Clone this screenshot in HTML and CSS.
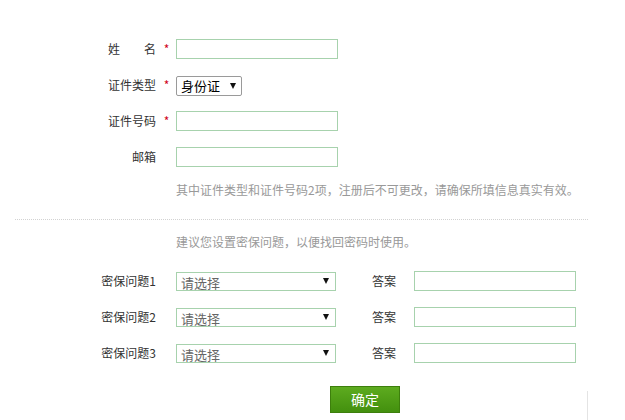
FILE: index.html
```html
<!DOCTYPE html>
<html lang="zh-CN">
<head>
<meta charset="utf-8">
<title>注册信息</title>
<link rel="stylesheet" href="styles.css">
</head>
<body>
<div class="page">
  <div class="section basic">
    <div class="row">
      <span class="label">姓　　名</span><span class="star">*</span>
      <span class="input"></span>
    </div>
    <div class="row">
      <span class="label">证件类型</span><span class="star">*</span>
      <span class="idselect"><span class="idtext">身份证</span><span class="arrow"></span></span>
    </div>
    <div class="row">
      <span class="label">证件号码</span><span class="star">*</span>
      <span class="input"></span>
    </div>
    <div class="row">
      <span class="label">邮箱</span><span class="star"></span>
      <span class="input"></span>
    </div>
  </div>
  <p class="hint hint1">其中证件类型和证件号码2项，注册后不可更改，请确保所填信息真实有效。</p>
  <div class="divider"></div>
  <p class="hint hint2">建议您设置密保问题，以便找回密码时使用。</p>
  <div class="section questions">
    <div class="row">
      <span class="label">密保问题1</span><span class="star"></span>
      <span class="qselect"><span class="qtext">请选择</span><span class="arrow"></span></span>
      <span class="alabel">答案</span>
      <span class="input"></span>
    </div>
    <div class="row">
      <span class="label">密保问题2</span><span class="star"></span>
      <span class="qselect"><span class="qtext">请选择</span><span class="arrow"></span></span>
      <span class="alabel">答案</span>
      <span class="input"></span>
    </div>
    <div class="row">
      <span class="label">密保问题3</span><span class="star"></span>
      <span class="qselect"><span class="qtext">请选择</span><span class="arrow"></span></span>
      <span class="alabel">答案</span>
      <span class="input"></span>
    </div>
  </div>
  <div class="actions">
    <button class="submit" type="button">确定</button>
    <span class="edge"></span>
  </div>
</div>
</body>
</html>
```
FILE: styles.css
```css
html, body {
  margin: 0;
  padding: 0;
  background: #fff;
}
body {
  font-family: "Noto Sans CJK SC", "Liberation Sans", sans-serif;
  font-size: 12px;
  color: #333;
  width: 625px;
  height: 420px;
  overflow: hidden;
}
.page {
  padding-top: 39px;
}
.section {
  display: flex;
  flex-direction: column;
  gap: 16px;
}
.row {
  display: flex;
  align-items: center;
  height: 20px;
  line-height: 20px;
}
.label {
  width: 156px;
  text-align: right;
  color: #333;
}
.star {
  width: 20px;
  text-align: center;
  color: #d0021b;
  font-size: 12px;
  padding-left: 1px;
  box-sizing: border-box;
}
.input {
  width: 162px;
  height: 20px;
  box-sizing: border-box;
  border: 1px solid #a7d2ad;
  background: #fff;
}
.idselect {
  width: 66px;
  height: 20px;
  box-sizing: border-box;
  border: 1px solid #9a9a9a;
  border-radius: 2px;
  display: flex;
  align-items: center;
  justify-content: space-between;
  padding: 0 5px 0 4px;
  color: #000;
  font-size: 13px;
  margin-top: 1px;
}
.arrow {
  width: 0;
  height: 0;
  border-left: 3px solid transparent;
  border-right: 3px solid transparent;
  border-top: 6px solid #111;
}
.qselect {
  width: 160px;
  height: 19px;
  box-sizing: border-box;
  border: 1px solid #a7d2ad;
  display: flex;
  align-items: center;
  justify-content: space-between;
  padding: 0 6px 0 4px;
}
.qtext {
  color: #666;
  font-size: 13px;
  line-height: 18px;
  padding-top: 3px;
}
.alabel {
  width: 60px;
  text-align: right;
  margin-right: 18px;
  color: #333;
}
.hint {
  margin: 0;
  padding-left: 176px;
  line-height: 20px;
  color: #999;
  font-size: 12px;
}
.hint1 {
  margin-top: 13px;
}
.divider {
  margin: 19px 0 0 15px;
  width: 573px;
  border-top: 1px dotted #d2d2d2;
}
.hint2 {
  margin-top: 12px;
}
.questions {
  margin-top: 19px;
}
.actions {
  display: flex;
  align-items: flex-start;
  width: 588px;
  margin-top: 23px;
  padding-left: 330px;
  box-sizing: border-box;
}
.submit {
  width: 70px;
  height: 27px;
  margin: 0;
  padding: 0;
  border: 1px solid #3d7f0c;
  background: linear-gradient(#5dab1f, #43900e);
  color: #fff;
  font-family: "Noto Sans CJK SC", "Liberation Sans", sans-serif;
  font-size: 14px;
  line-height: 25px;
  cursor: pointer;
}
.edge {
  margin-left: auto;
  margin-top: 5px;
  height: 40px;
  border-right: 1px solid #e4e4e4;
}
```
